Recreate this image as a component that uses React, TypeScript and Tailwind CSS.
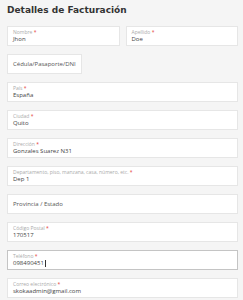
import React from "react";

type Field = {
  label?: string;
  value?: string;
  placeholder?: string;
  focused?: boolean;
};

const rows: Field[] = [
  { label: "País", value: "España" },
  { label: "Ciudad", value: "Quito" },
  { label: "Dirección", value: "Gonzales Suarez N31" },
  { label: "Departamento, piso, manzana, casa, número, etc.", value: "Dep 1" },
  { placeholder: "Provincia / Estado" },
  { label: "Código Postal", value: "170517" },
  { label: "Teléfono", value: "098490451", focused: true },
  { label: "Correo electrónico", value: "skokaadmin@gmail.com" },
];

function Input({ label, value, placeholder, focused }: Field) {
  return (
    <div
      className={`h-[20px] bg-white border px-[5px] flex flex-col ${
        placeholder ? "justify-center" : "pt-[2px]"
      } ${focused ? "border-[#c4c4c4]" : "border-[#e6e6e6]"}`}
    >
      {placeholder ? (
        <span className="text-[6px] leading-[8px] text-[#555]">
          {placeholder}
        </span>
      ) : (
        <>
          <span className="text-[5px] leading-[6px] text-[#aaa]">
            {label} <span className="text-[#e53935]">*</span>
          </span>
          <span className="text-[6px] leading-[8px] text-[#444] flex items-center">
            {value}
            {focused && <span className="ml-[1px] w-[1px] h-[7px] bg-[#333]" />}
          </span>
        </>
      )}
    </div>
  );
}

export default function App() {
  return (
    <main
      className="min-h-screen bg-[#f5f5f5] pl-[7px] pr-[5px] pt-[4px]"
      style={{ fontFamily: '"Open Sans", "Liberation Sans", sans-serif' }}
    >
      <h2
        className="text-[9px] leading-[12px] font-bold text-[#333]"
        style={{ fontFamily: '"DejaVu Sans", sans-serif' }}
      >
        Detalles de Facturación
      </h2>

      <div className="mt-[10px] flex flex-col gap-[8px]">
        <div className="flex gap-[6px]">
          <div className="flex-1">
            <Input label="Nombre" value="Jhon" />
          </div>
          <div className="flex-1">
            <Input label="Apellido" value="Doe" />
          </div>
        </div>

        <div className="w-[75px]">
          <Input placeholder="Cédula/Pasaporte/DNI" />
        </div>

        {rows.map((row, i) => (
          <Input key={i} {...row} />
        ))}
      </div>
    </main>
  );
}
